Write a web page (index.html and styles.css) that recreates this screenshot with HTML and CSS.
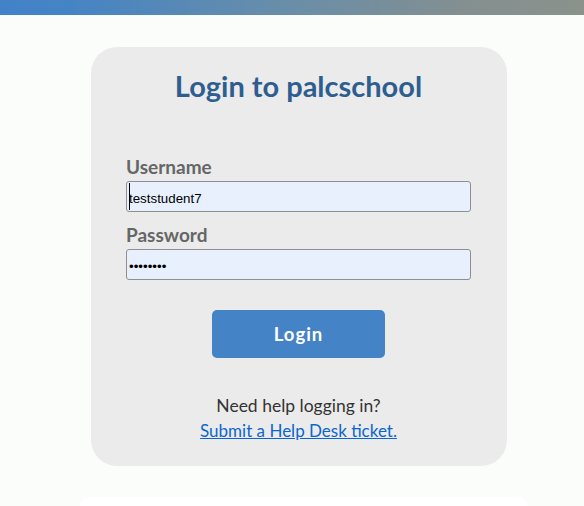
FILE: index.html
```html
<!DOCTYPE html>
<html lang="en">
<head>
<meta charset="utf-8">
<title>Login to palcschool</title>
<link rel="stylesheet" href="styles.css">
</head>
<body>
<div class="topbar"></div>
<div class="page">
  <form class="card" onsubmit="return false">
    <h1 class="title">Login to palcschool</h1>
    <label class="label" for="username">Username</label>
    <div class="field">
      <input class="input" id="username" type="text" value="teststudent7">
      <span class="caret"></span>
    </div>
    <label class="label" for="password">Password</label>
    <div class="field">
      <input class="input" id="password" type="password" value="12345678">
    </div>
    <div class="actions">
      <button class="btn" type="submit">Login</button>
    </div>
    <p class="help">Need help logging in?<br><a href="#" class="link">Submit a Help Desk ticket.</a></p>
  </form>
  <div class="below"></div>
</div>
</body>
</html>
```
FILE: styles.css
```css
html, body {
  margin: 0;
  padding: 0;
}
body {
  background: #fbfdfb;
  font-family: "Lato", "Open Sans", sans-serif;
  height: 506px;
  overflow: hidden;
}
.topbar {
  height: 15px;
  background: linear-gradient(to right, #4282c8 0%, #4584c4 12%, #6a8ea8 50%, #848f90 80%, #8a928b 100%);
}
.page {
  padding: 32px 0 0 91px;
}
.card {
  width: 416px;
  height: 419px;
  box-sizing: border-box;
  background: #ebebeb;
  border-radius: 26px;
  padding: 19px 36px 0 35px;
  margin: 0;
}
.title {
  margin: 0;
  text-align: center;
  font-size: 29px;
  line-height: 40px;
  font-weight: 700;
  color: #2e5e90;
}
.label {
  display: block;
  font-size: 19px;
  line-height: 22px;
  font-weight: 700;
  color: #666666;
  margin-top: 50px;
}
.label + .field {
  margin-top: 3px;
}
.field + .label {
  margin-top: 12px;
}
.field {
  position: relative;
}
.input {
  display: block;
  width: 345px;
  height: 31px;
  box-sizing: border-box;
  margin: 0;
  padding: 3px 2px 0;
  border: 1px solid #8f8f8f;
  border-radius: 3px;
  background: #e8f0fe;
  font-family: "Liberation Sans", Arial, sans-serif;
  font-size: 13.33px;
  color: #000;
  outline: none;
}
.caret {
  position: absolute;
  left: 3px;
  top: 2px;
  width: 1px;
  height: 27px;
  background: #000;
}
.actions {
  display: flex;
  justify-content: center;
  margin-top: 30px;
}
.btn {
  width: 173px;
  height: 48px;
  border: none;
  border-radius: 5px;
  background: #4383c6;
  color: #ffffff;
  font-family: "Lato", "Open Sans", sans-serif;
  font-weight: 700;
  font-size: 18.5px;
  letter-spacing: 1px;
  cursor: pointer;
}
.help {
  margin: 35px 0 0;
  text-align: center;
  font-size: 17.5px;
  line-height: 25px;
  color: #333333;
}
.link {
  font-size: 17px;
  color: #0b66cf;
  text-decoration: underline;
}
.below {
  margin: 31px 0 0 -11px;
  width: 447px;
  height: 9px;
  background: #fefffe;
  border-radius: 26px 26px 0 0;
}
```
